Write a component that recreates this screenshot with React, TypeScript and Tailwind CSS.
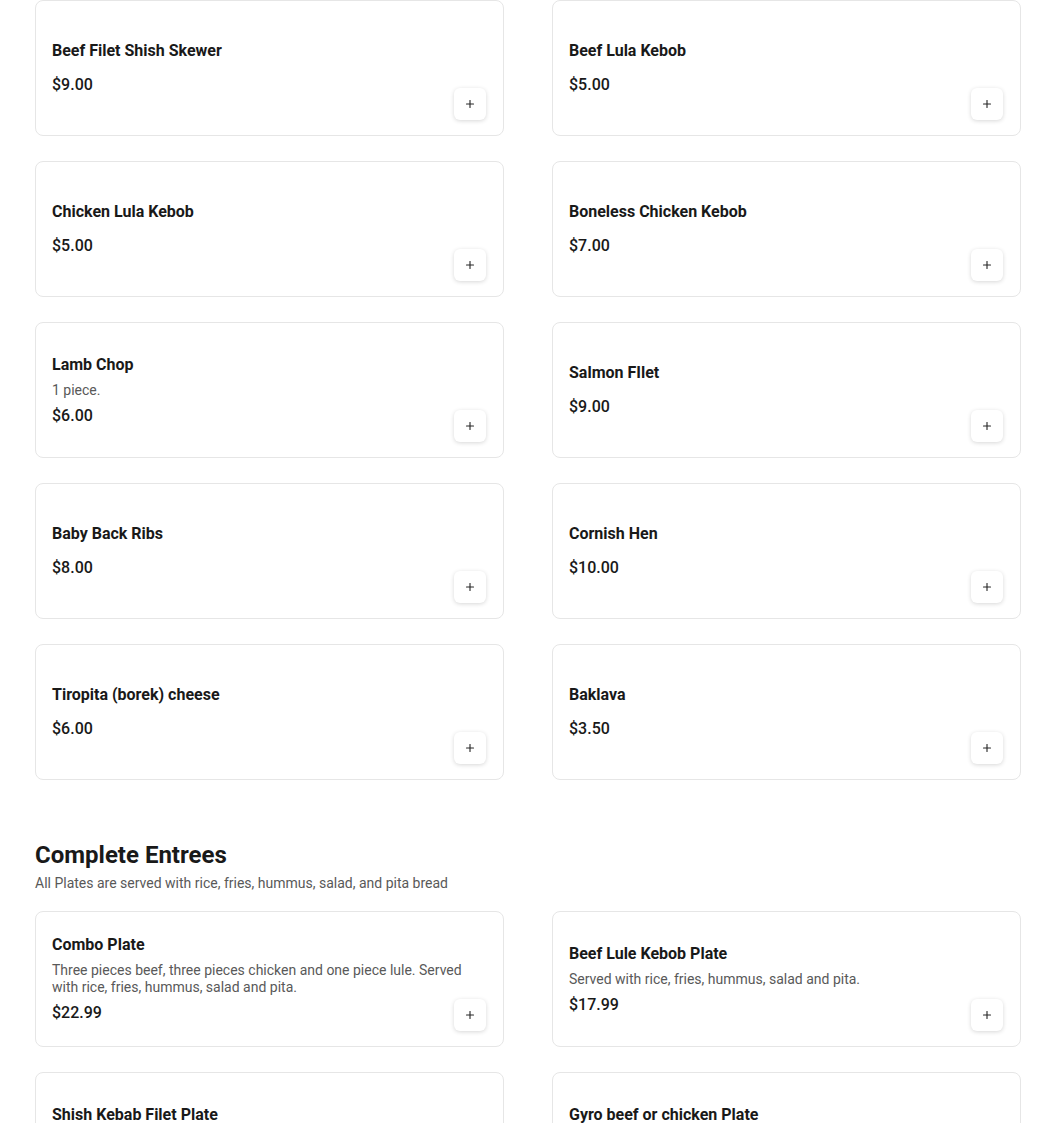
import { Plus } from "lucide-react";

type Item = { name: string; price: string; desc?: string };

const kebobs: Item[] = [
  { name: "Beef Filet Shish Skewer", price: "$9.00" },
  { name: "Beef Lula Kebob", price: "$5.00" },
  { name: "Chicken Lula Kebob", price: "$5.00" },
  { name: "Boneless Chicken Kebob", price: "$7.00" },
  { name: "Lamb Chop", desc: "1 piece.", price: "$6.00" },
  { name: "Salmon FIlet", price: "$9.00" },
  { name: "Baby Back Ribs", price: "$8.00" },
  { name: "Cornish Hen", price: "$10.00" },
  { name: "Tiropita (borek) cheese", price: "$6.00" },
  { name: "Baklava", price: "$3.50" },
];

const entrees: Item[] = [
  {
    name: "Combo Plate",
    desc: "Three pieces beef, three pieces chicken and one piece lule. Served with rice, fries, hummus, salad and pita.",
    price: "$22.99",
  },
  { name: "Beef Lule Kebob Plate", desc: "Served with rice, fries, hummus, salad and pita.", price: "$17.99" },
  { name: "Shish Kebab Filet Plate", desc: "Served with rice, fries, hummus, salad and pita.", price: "$19.99" },
  { name: "Gyro beef or chicken Plate", desc: "Served with rice, fries, hummus, salad and pita.", price: "$16.99" },
];

function MenuCard({ item }: { item: Item }) {
    return (
        <div className="relative h-[136px] rounded-lg border border-[#e6e6e6] bg-white flex items-center pl-4 pr-10">
            <div className="flex flex-col">
                <p className="text-base font-bold leading-6 text-[#191919]">{item.name}</p>
                {item.desc && (
                    <p className="text-sm leading-[17px] text-[#595959] mt-[5px] mb-[5px]">{item.desc}</p>
                )}
                <p className={`text-base font-medium leading-6 text-[#191919] ${item.desc ? "" : "mt-[10px]"}`}>
                    {item.price}
                </p>
            </div>
            {/* add button */}
            <button className="absolute right-[17px] bottom-[15px] w-8 h-8 rounded-md bg-white flex items-center justify-center shadow-[0_1px_4px_rgba(0,0,0,0.16)]">
                <Plus className="w-3 h-3 text-[#262626]" strokeWidth={2.25} />
            </button>
        </div>
    );
}

export default function App() {
    return (
        <main
            className="min-h-screen bg-white pl-[35px]"
            style={{ fontFamily: "Roboto, 'Liberation Sans', sans-serif" }}
        >
            <div className="grid grid-cols-[469px_469px] gap-x-12 gap-y-[25px]">
                {kebobs.map((item) => (
                    <MenuCard key={item.name} item={item} />
                ))}
            </div>

            {/* Complete Entrees */}
            <div className="mt-[59px]">
                <h2 className="text-2xl font-bold leading-8 text-[#191919]">Complete Entrees</h2>
                <p className="text-sm leading-5 text-[#595959] mt-[2px]">
                    All Plates are served with rice, fries, hummus, salad, and pita bread
                </p>
            </div>

            <div className="grid grid-cols-[469px_469px] gap-x-12 gap-y-[25px] mt-[18px] pb-10">
                {entrees.map((item) => (
                    <MenuCard key={item.name} item={item} />
                ))}
            </div>
        </main>
    );
}
